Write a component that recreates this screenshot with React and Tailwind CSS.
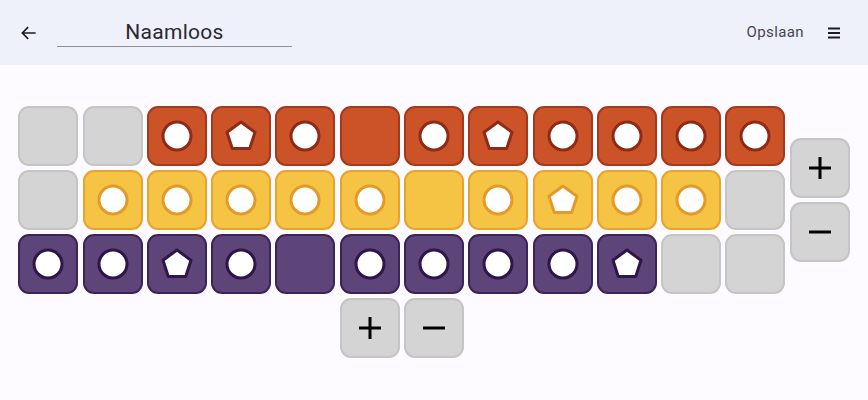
import React from 'react';

const palette = {
    grey: 'bg-[#d4d4d4] border-[#c5c5c5]',
    orange: 'bg-[#cc5328] border-[#a23a1e]',
    yellow: 'bg-[#f6c444] border-[#e6a42f]',
    purple: 'bg-[#5d4479] border-[#3c2459]',
};

const stroke = {
    orange: '#8e2b17',
    yellow: '#e39a2a',
    purple: '#2e1649',
};

// g = grey, o = circle, p = pentagon, e = empty coloured
const rows = [
    { color: 'orange', cells: 'ggopoeopoooo' },
    { color: 'yellow', cells: 'gooooeopoog' },
    { color: 'purple', cells: 'oopoeoooopgg' },
];
rows[1].cells = 'goooooeopoog';

function Mark({ kind, color }) {
    if (kind === 'o') {
        return (
            <svg width="34" height="34" viewBox="0 0 34 34">
                <circle cx="17" cy="17" r="14" fill="white" stroke={stroke[color]} strokeWidth="3" />
            </svg>
        );
    }
    if (kind === 'p') {
        return (
            <svg width="34" height="34" viewBox="0 0 34 34">
                <polygon
                    points="17,3 31,13.2 25.7,29.6 8.3,29.6 3,13.2"
                    fill="white"
                    stroke={stroke[color]}
                    strokeWidth="3"
                    strokeLinejoin="round"
                />
            </svg>
        );
    }
    return null;
}

function Tile({ kind, color }) {
    const c = kind === 'g' ? 'grey' : color;
    return (
        <div className={`w-[60px] h-[60px] rounded-[11px] border-2 flex items-center justify-center ${palette[c]}`}>
            <Mark kind={kind} color={color} />
        </div>
    );
}

function Plus() {
    return (
        <svg width="26" height="26" viewBox="0 0 26 26">
            <path d="M13 2v22M2 13h22" stroke="black" strokeWidth="3" />
        </svg>
    );
}

function Minus() {
    return (
        <svg width="26" height="26" viewBox="0 0 26 26">
            <path d="M2 13h22" stroke="black" strokeWidth="3" />
        </svg>
    );
}

function CtrlButton({ children }) {
    return (
        <button className="w-[60px] h-[60px] rounded-[11px] border-2 border-[#c5c5c5] bg-[#d4d4d4] flex items-center justify-center">
            {children}
        </button>
    );
}

export default function App() {
    return (
        <div className="w-[868px] h-[400px] bg-[#fdfbff] font-['Roboto',sans-serif] overflow-hidden">
            <header className="h-[65px] bg-[#eef0fa] flex items-center pl-[19px] pr-[26px]">
                <svg width="20" height="20" viewBox="0 0 24 24" className="shrink-0">
                    <path d="M20 12H4M11 5l-7 7 7 7" fill="none" stroke="#1c1b1f" strokeWidth="2" />
                </svg>
                <div className="ml-[18px] w-[235px] border-b border-[#8d8f99] text-center text-[21px] tracking-[0.3px] leading-[26px] text-[#2a2a2e] pb-[1px] mt-[1px]">
                    Naamloos
                </div>
                <div className="flex-1" />
                <span className="text-[15px] tracking-[0.4px] text-[#44464f]">Opslaan</span>
                <svg width="16" height="16" viewBox="0 0 16 16" className="ml-[22px]">
                    <path d="M2 3.5h12M2 8h12M2 12.5h12" stroke="#1c1b1f" strokeWidth="1.8" />
                </svg>
            </header>
            <div className="flex justify-center pt-[41px]">
                <div className="grid grid-cols-[auto_auto] gap-x-[4.3px] gap-y-[4px]">
                    <div className="flex flex-col gap-[4px]">
                        {rows.map((row, i) => (
                            <div key={i} className="flex gap-[4.3px]">
                                {row.cells.split('').map((k, j) => (
                                    <Tile key={j} kind={k} color={row.color} />
                                ))}
                            </div>
                        ))}
                    </div>
                    <div className="flex flex-col gap-[4px] self-center">
                        <CtrlButton><Plus /></CtrlButton>
                        <CtrlButton><Minus /></CtrlButton>
                    </div>
                    <div className="flex justify-center gap-[4px]">
                        <CtrlButton><Plus /></CtrlButton>
                        <CtrlButton><Minus /></CtrlButton>
                    </div>
                </div>
            </div>
        </div>
    );
}
